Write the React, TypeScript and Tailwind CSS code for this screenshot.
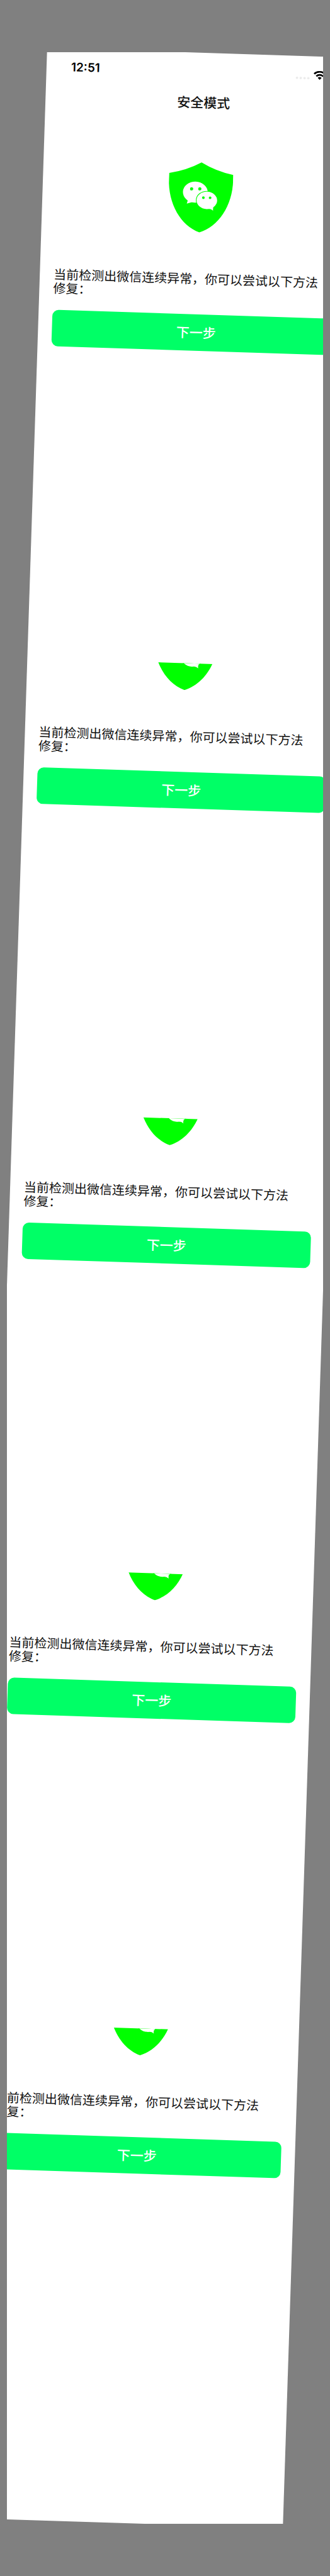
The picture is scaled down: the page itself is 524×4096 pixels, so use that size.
function Shield() {
  return (
    <svg viewBox="-243 -266 486 531" className="h-[112px] w-[102px] shrink-0" aria-hidden="true">
      <path
        fill="#00ff00"
        d="M0-266Q-110-203-243-178V-135C-243 56-143 217 0 265C143 217 243 56 243-135V-178Q110-203 0-266Z"
      />
      {/* large bubble */}
      <ellipse cx="-40" cy="-39" rx="94" ry="80" fill="#fff" />
      <path d="M-97 16Q-94 32-102 50L-64 38L-30 30Z" fill="#fff" />
      <circle cx="-69" cy="-63" r="12" fill="#00ff00" />
      <circle cx="-7" cy="-65" r="12" fill="#00ff00" />
      {/* small bubble */}
      <ellipse cx="49" cy="20" rx="83" ry="71" fill="#00ff00" />
      <ellipse cx="49" cy="20" rx="78" ry="66" fill="#fff" />
      <path d="M64 84Q84 84 99 97Q94 84 101 70Z" fill="#fff" />
      <circle cx="22" cy="1" r="10" fill="#00ff00" />
      <circle cx="73" cy="0" r="10" fill="#00ff00" />
    </svg>
  );
}

function StatusBar() {
  return (
    <header className="flex h-[60px] items-center justify-between pl-[39px] pr-[58px]">
      <time className="font-['Inter','Liberation_Sans',sans-serif] text-[19px] leading-6 font-semibold text-black">
        12:51
      </time>
      <div className="flex items-end gap-[5px]">
        <svg viewBox="0 0 24 4" className="h-1 w-6" aria-hidden="true">
          <g fill="#ececec">
            <circle cx="3" cy="2" r="2" />
            <circle cx="9" cy="2" r="2" />
            <circle cx="15" cy="2" r="2" />
            <circle cx="21" cy="2" r="2" />
          </g>
        </svg>
        <svg viewBox="0 0 20 14" className="h-[14px] w-5" aria-hidden="true">
          <path d="M1.2 4.9A12.4 12.4 0 0 1 18.8 4.9" fill="none" stroke="#000" strokeWidth="2.8" />
          <path d="M4.6 8.4A7.6 7.6 0 0 1 15.4 8.4" fill="none" stroke="#000" strokeWidth="2.7" />
          <path d="M10 14L6.9 10.9A4.4 4.4 0 0 1 13.1 10.9Z" fill="#000" />
        </svg>
      </div>
    </header>
  );
}

function Notice() {
  return (
    <div className="px-[22px] pt-[62px]">
      <p className="pr-6 text-[20px] leading-[22px] text-[#111]">
        当前检测出微信连续异常，你可以尝试以下方法修复：
      </p>
      <button
        type="button"
        className="mt-6 flex h-[58px] w-full items-center justify-center rounded-[10px] bg-[#00ff66] text-[21px] font-medium text-white"
      >
        下一步
      </button>
    </div>
  );
}

const repeats = [1, 2, 3, 4];

export default function App() {
  return (
    <div className="bg-[#808080] px-[11px] py-[83px] font-['Noto_Sans_CJK_SC',sans-serif]">
      <div className="overflow-hidden">
        <main className="flex rotate-[1.86deg] flex-col gap-[493px] bg-white pb-[556px]">
          <section className="pb-1">
            <StatusBar />
            <h1 className="text-center text-[21px] leading-9 font-medium text-[#111]">安全模式</h1>
            <div className="mt-[78px] flex justify-center">
              <Shield />
            </div>
            <Notice />
          </section>
          {repeats.map((n) => (
            <section key={n}>
              <div className="flex h-[43px] items-end justify-center overflow-hidden">
                <Shield />
              </div>
              <Notice />
            </section>
          ))}
        </main>
      </div>
    </div>
  );
}
